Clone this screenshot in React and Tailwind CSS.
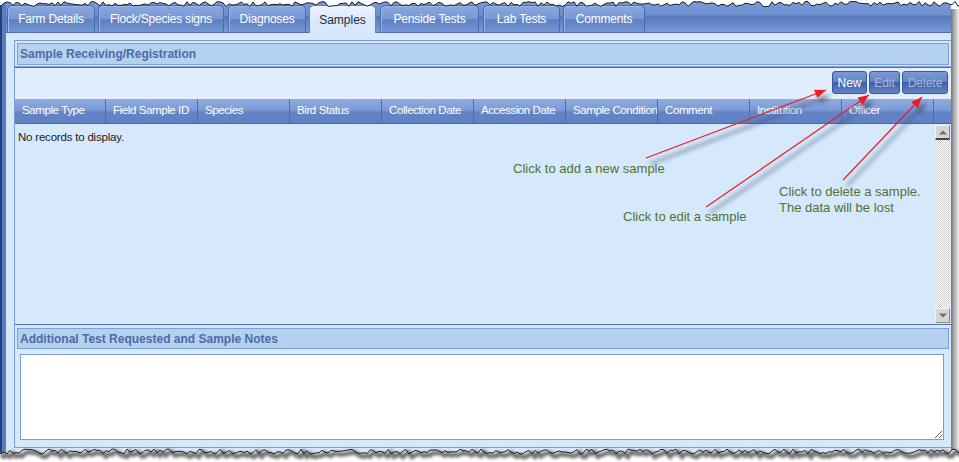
import React from "react";

const tabs = [
  { t: "Farm Details", c: "w-[88px] ml-[1px]" },
  { t: "Flock/Species signs", c: "w-[126px] ml-[3px]" },
  { t: "Diagnoses", c: "w-[78px] ml-[4px]" },
  { t: "Samples", c: "w-[67px] ml-[3px]", sel: true },
  { t: "Penside Tests", c: "w-[99px] ml-[4px]" },
  { t: "Lab Tests", c: "w-[77px] ml-[4px]" },
  { t: "Comments", c: "w-[82px] ml-[3px]" },
];

const cols = [
  { t: "Sample Type", c: "w-[91px]" },
  { t: "Field Sample ID", c: "w-[92px]" },
  { t: "Species", c: "w-[92px]" },
  { t: "Bird Status", c: "w-[92px]" },
  { t: "Collection Date", c: "w-[92px]" },
  { t: "Accession Date", c: "w-[92px]" },
  { t: "Sample Condition", c: "w-[92px]" },
  { t: "Comment", c: "w-[92px]" },
  { t: "Institution", c: "w-[92px]" },
  { t: "Officer", c: "w-[92px]" },
];

function seeded(seed) {
  let s = seed;
  return () => {
    s = (s * 9301 + 49297) % 233280;
    return s / 233280;
  };
}

function TornTop() {
  const r = seeded(11);
  const pts = [];
  for (let x = -2; x <= 962; x += 3) pts.push([x, 1.5 + r() * 5]);
  const line = pts.map(([x, y]) => `${x},${y.toFixed(1)}`).join(" ");
  const d = "M-2,0 " + pts.map(([x, y]) => `L${x},${y.toFixed(1)}`).join(" ") + " L962,0 Z";
  return (
    <svg className="absolute left-0 top-0 pointer-events-none" width="959" height="12">
      <path d={d} fill="#ffffff" />
      <polyline points={line} fill="none" stroke="#1d1d1d" strokeWidth="1" />
    </svg>
  );
}

function TornBottom() {
  const r = seeded(29);
  const pts = [];
  for (let x = -2; x <= 962; x += 3) pts.push([x, 9 + r() * 5]);
  const line = pts.map(([x, y]) => `${x},${y.toFixed(1)}`).join(" ");
  const d = "M-2,30 " + pts.map(([x, y]) => `L${x},${y.toFixed(1)}`).join(" ") + " L962,30 Z";
  const sh = pts.map(([x, y]) => `${x + 3},${(y + 3).toFixed(1)}`).join(" ");
  return (
    <svg className="absolute left-0 top-[440px] pointer-events-none" width="959" height="22">
      <defs>
        <filter id="tb" x="-5%" y="-100%" width="110%" height="300%">
          <feGaussianBlur stdDeviation="1.4" />
        </filter>
      </defs>
      <path d={d} fill="#ffffff" />
      <polyline points={sh} fill="none" stroke="#6e6e6e" strokeWidth="4.5" filter="url(#tb)" />
      <polyline points={line} fill="none" stroke="#1d1d1d" strokeWidth="1" />
    </svg>
  );
}

const arrows = [
  [646, 158, 826, 90],
  [706, 207, 869, 95],
  [843, 180, 922, 97],
];

function head(x1, y1, x2, y2) {
  const dx = x2 - x1;
  const dy = y2 - y1;
  const L = Math.hypot(dx, dy);
  const ux = dx / L;
  const uy = dy / L;
  const bx = x2 - ux * 11;
  const by = y2 - uy * 11;
  const px = -uy * 4.5;
  const py = ux * 4.5;
  return `${x2},${y2} ${(bx + px).toFixed(1)},${(by + py).toFixed(1)} ${(bx - px).toFixed(1)},${(by - py).toFixed(1)}`;
}

function Arrows() {
  return (
    <svg className="absolute left-0 top-0 pointer-events-none" width="959" height="462">
      <defs>
        <filter id="ash" x="-20%" y="-20%" width="140%" height="140%">
          <feGaussianBlur stdDeviation="2" />
        </filter>
      </defs>
      <g transform="translate(4,6)" filter="url(#ash)" opacity="0.55">
        {arrows.map((a, i) => (
          <g key={i}>
            <line x1={a[0]} y1={a[1]} x2={a[2]} y2={a[3]} stroke="#3d4a66" strokeWidth="2.5" />
            <polygon points={head(...a)} fill="#2d3650" />
          </g>
        ))}
      </g>
      {arrows.map((a, i) => (
        <g key={i}>
          <line x1={a[0]} y1={a[1]} x2={a[2]} y2={a[3]} stroke="#ee1c24" strokeWidth="1.2" />
          <polygon points={head(...a)} fill="#ee1c24" />
        </g>
      ))}
    </svg>
  );
}

function ScrollBtn({ up }) {
  return (
    <div
      className={
        "h-[15px] flex items-center justify-center bg-[#d9d6cf] border border-t-[#f4f3ef] border-l-[#f4f3ef] border-r-[#8d8a84] " +
        (up ? "border-b-2 border-b-[#45454a]" : "border-b-[#8d8a84]")
      }
    >
      <svg width="8" height="5" viewBox="0 0 8 5">
        {up ? <polygon points="0,4.5 8,4.5 4,0.5" fill="#6e6e6e" /> : <polygon points="0,0.5 8,0.5 4,4.5" fill="#6e6e6e" />}
      </svg>
    </div>
  );
}

function SectionHeader({ children, cls }) {
  return (
    <div
      className={
        "mx-[2px] flex items-center px-[2px] bg-[#b5d1f0] border border-[#7c9fd9] text-[12px] font-bold text-[#4c6aa7] " + cls
      }
    >
      {children}
    </div>
  );
}

export default function App() {
  return (
    <div className="relative w-[959px] h-[462px] overflow-hidden bg-white font-['Liberation_Sans',Arial,sans-serif]">
      <div className="flex h-full">
        <div className="flex w-[951px] h-full border-l-2 border-[#23407a]">
          <div className="w-[4px] bg-[#5b7dc0]" />
          <div className="flex-1 flex flex-col bg-[#d8e8fc]">
            {/* tab strip */}
            <div className="h-[33px] flex items-end border-b border-[#4e70b3] bg-[linear-gradient(to_bottom,#7b9bd7_0%,#6e8fd0_46%,#5678bc_52%,#7a9ad6_100%)]">
              {tabs.map((tb) =>
                tb.sel ? (
                  <div
                    key={tb.t}
                    className={
                      "h-[28px] -mb-[1px] rounded-t-[5px] border border-b-0 border-[#6485c6] flex items-center justify-center text-[12px] text-[#1f2a3d] bg-[linear-gradient(to_bottom,#edf4fe_0%,#dbe9fc_50%,#d6e7fb_100%)] " +
                      tb.c
                    }
                  >
                    {tb.t}
                  </div>
                ) : (
                  <div
                    key={tb.t}
                    className={
                      "h-[27px] rounded-t-[5px] border border-b-0 border-[#4a6bae] flex items-center justify-center text-[12px] tracking-[-0.2px] text-white shadow-[inset_1px_1px_0_#9db6e6] bg-[linear-gradient(to_bottom,#8aa8de_0%,#7898d5_48%,#5e80c3_53%,#7394d2_100%)] " +
                      tb.c
                    }
                  >
                    {tb.t}
                  </div>
                )
              )}
            </div>

            <div className="pl-[8px] pt-[7px]">
              <div className="h-[408px] flex flex-col border-l border-t border-b border-[#7a9dd8]">
                <SectionHeader cls="mt-[2px] h-[22px]">Sample Receiving/Registration</SectionHeader>
                <div className="mt-[1px] h-[1px] bg-[#82a3da]" />
                <div className="h-[1px] bg-[#4f71b4]" />
                {/* toolbar */}
                <div className="h-[31px] bg-[#e1edfd] flex justify-end items-start pt-[3px] pr-[3px] gap-[2px]">
                  <div className="w-[35px] h-[23px] rounded-[3px] border border-[#3a5896] flex items-center justify-center text-[12px] text-white bg-[linear-gradient(to_bottom,#7999d6_0%,#6585c8_45%,#3e5fa3_50%,#4d6eb2_70%,#6384c7_100%)]">
                    New
                  </div>
                  <div className="w-[31px] h-[23px] rounded-[3px] border border-[#3a5896] flex items-center justify-center text-[12px] text-[#aab8d4] bg-[linear-gradient(to_bottom,#7999d6_0%,#6585c8_45%,#3e5fa3_50%,#4d6eb2_70%,#6384c7_100%)]">
                    Edit
                  </div>
                  <div className="w-[46px] h-[23px] rounded-[3px] border border-[#3a5896] flex items-center justify-center text-[12px] text-[#aab8d4] bg-[linear-gradient(to_bottom,#7999d6_0%,#6585c8_45%,#3e5fa3_50%,#4d6eb2_70%,#6384c7_100%)]">
                    Delete
                  </div>
                </div>
                {/* grid header */}
                <div className="h-[25px] flex border-b border-[#4668aa] bg-[linear-gradient(to_bottom,#90acdf_0%,#7b9ad6_45%,#6384c5_55%,#6082c4_100%)]">
                  {cols.map((c) => (
                    <div
                      key={c.t}
                      className={
                        "h-full flex items-center pl-[7px] border-r border-[#4c6dae] text-[11.5px] tracking-[-0.4px] text-white whitespace-nowrap overflow-hidden " + c.c
                      }
                    >
                      {c.t}
                    </div>
                  ))}
                  <div className="flex-1" />
                </div>
                {/* grid body */}
                <div className="h-[200px] flex bg-[#d6e8fc]">
                  <div className="flex-1 pl-[3px] pt-[5px] text-[11.5px] tracking-[-0.2px] text-[#1c1c1c]">No records to display.</div>
                  <div className="w-[16px] flex flex-col pt-[1px] pb-[1px] pr-[1px]">
                    <ScrollBtn up />
                    <div className="flex-1 bg-[repeating-conic-gradient(#cfcfcf_0%_25%,#ffffff_0%_50%)] bg-[length:2px_2px]" />
                    <ScrollBtn />
                  </div>
                </div>
                <div className="h-[1px] bg-[#4e70b2]" />
                {/* notes */}
                <SectionHeader cls="mt-[3px] h-[21px]">Additional Test Requested and Sample Notes</SectionHeader>
                <div className="mt-[5px] ml-[5px] mr-[7px] h-[86px] flex">
                  <textarea className="flex-1 h-full bg-white border border-[#7a9dd8] outline-none" />
                </div>
              </div>
            </div>
          </div>
        </div>
        <div className="w-[8px] mt-[9px] h-full bg-[linear-gradient(to_right,#777777_0%,#aaaaaa_40%,#f2f2f2_100%)]" />
      </div>

      <Arrows />

      <div className="absolute left-[513px] top-[161px] text-[13px] leading-[16px] text-[#4f7330] pointer-events-none">
        Click to add a new sample
      </div>
      <div className="absolute left-[623px] top-[209px] text-[13px] leading-[16px] text-[#4f7330] pointer-events-none">
        Click to edit a sample
      </div>
      <div className="absolute left-[779px] top-[184px] text-[13px] leading-[16px] text-[#4f7330] pointer-events-none">
        <div>Click to delete a sample.</div>
        <div>The data will be lost</div>
      </div>

      <TornTop />
      <TornBottom />
    </div>
  );
}
